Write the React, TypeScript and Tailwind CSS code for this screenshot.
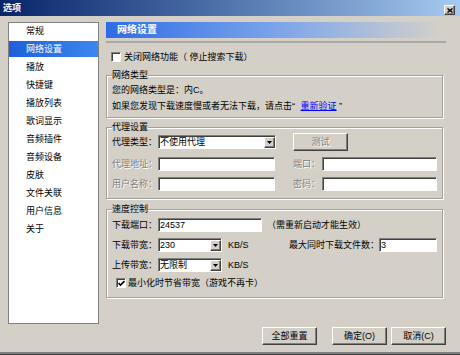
import type { ReactNode } from 'react';

const sunken =
  'border border-t-[#808080] border-l-[#808080] border-b-white border-r-white shadow-[inset_1px_1px_0_#404040]';
const raised =
  'border border-t-white border-l-white border-b-[#404040] border-r-[#404040] shadow-[inset_-1px_-1px_0_#808080]';
const disabled = 'text-[#808080] [text-shadow:1px_1px_0_#fff]';

const menu = ['常规', '网络设置', '播放', '快捷键', '播放列表', '歌词显示', '音频插件', '音频设备', '皮肤', '文件关联', '用户信息', '关于'];

function Group({ title, className, children }: { title: string; className: string; children: ReactNode }) {
  return (
    <fieldset
      className={`w-[337px] border border-[#a0a0a0] shadow-[inset_1px_1px_0_#fff,1px_1px_0_#fff] px-[5px] ${className}`}
    >
      <legend className="p-0 leading-[12px] bg-[#d4d0c8]">{title}</legend>
      {children}
    </fieldset>
  );
}

function Input({ w, value = '' }: { w: string; value?: string }) {
  return (
    <div className={`${w} h-[14px] bg-white ${sunken} flex items-center pl-[1px] leading-[12px]`}>{value}</div>
  );
}

function Select({ w, value }: { w: string; value: string }) {
  return (
    <div className={`${w} h-[14px] bg-white ${sunken} flex items-center`}>
      <span className="flex-1 pl-[1px] leading-[12px]">{value}</span>
      <span className={`w-[11px] h-[11px] bg-[#d4d0c8] ${raised} flex items-center justify-center`}>
        <svg width="5" height="3" viewBox="0 0 5 3">
          <path d="M0 0h5L2.5 3z" fill="#000" />
        </svg>
      </span>
    </div>
  );
}

function Check({ on = false }: { on?: boolean }) {
  return (
    <div className={`w-[10px] h-[10px] bg-white ${sunken} flex items-center justify-center`}>
      {on && (
        <svg width="7" height="7" viewBox="0 0 7 7">
          <path d="M0.5 3l2 2L6.5 1" stroke="#000" strokeWidth="1.6" fill="none" />
        </svg>
      )}
    </div>
  );
}

function Button({ children, className = '' }: { children: ReactNode; className?: string }) {
  return (
    <div className={`h-[18px] bg-[#d4d0c8] ${raised} flex items-center justify-center leading-[12px] ${className}`}>
      {children}
    </div>
  );
}

export default function App() {
  return (
    <div
      lang="zh-CN"
      className="w-[460px] h-[355px] bg-[#d4d0c8] flex flex-col text-[9px] text-black font-['Liberation_Sans','Noto_Sans_CJK_SC',sans-serif] border-b border-b-[#404040] shadow-[inset_0_-2px_0_#808080] overflow-hidden"
    >
      <div className="h-[16px] shrink-0 bg-linear-to-r from-[#0a246a] to-[#a6caf0] flex items-start justify-between pl-[3px] pr-[5px]">
        <span className="mt-[2px] leading-[12px] text-white font-bold">选项</span>
        <span className={`mt-[5px] w-[11px] h-[10px] bg-[#d4d0c8] ${raised} flex items-center justify-center`}>
          <svg width="6" height="5" viewBox="0 0 6 5">
            <path d="M0.5 0.5l5 4M5.5 0.5l-5 4" stroke="#000" strokeWidth="1.4" />
          </svg>
        </span>
      </div>

      <div className="flex pt-[6px]">
        <div className="ml-[8px] w-[91px] h-[302px] bg-white border border-[#808080]">
          {menu.map((m) => (
            <div key={m} className="h-[18px]">
              <div
                className={`h-[16px] flex items-center pl-[17px] leading-[12px] ${
                  m === '网络设置' ? 'bg-linear-to-r from-[#1f5fd8] to-[#3d86f0] text-white' : ''
                }`}
              >
                {m}
              </div>
            </div>
          ))}
        </div>

        <div className="ml-[7px] w-[340px] flex flex-col">
          <div className="w-[337px] h-[16px] bg-linear-to-r from-[#2e6be6] via-[#7aa3ea] to-[#d4d0c8] flex items-center pl-[11px] text-white font-bold text-[10px] leading-[12px]">
            网络设置
          </div>
          <div className="mt-[3px] w-[340px] h-[2px] bg-[#a8a8a8]" />

          <div className="mt-[8px] h-[12px] flex items-center ml-[5px] gap-[3px] leading-[12px]">
            <Check />
            <span>关闭网络功能（ 停止搜索下载）</span>
          </div>

          <Group title="网络类型" className="mt-[6px] pb-[5px]">
            <div className="mt-[3px] leading-[12px]">您的网络类型是：内C。</div>
            <div className="mt-[4px] leading-[12px]">
              如果您发现下载速度慢或者无法下载，请点击“ <span className="ml-[3px] text-[#0000ff] underline">重新验证</span> ”
            </div>
          </Group>

          <Group title="代理设置" className="mt-[3px] pb-[7px]">
            <div className="h-[18px] flex items-center leading-[12px]">
              <span className="w-[46px]">代理类型：</span>
              <Select w="w-[118px]" value="不使用代理" />
              <Button className={`ml-[17px] w-[55px] ${disabled}`}>测试</Button>
            </div>
            <div className="mt-[6px] h-[14px] flex items-center leading-[12px]">
              <span className={`w-[46px] ${disabled}`}>代理地址：</span>
              <Input w="w-[117px]" />
              <span className={`ml-[18px] w-[29px] ${disabled}`}>端口：</span>
              <Input w="w-[115px]" />
            </div>
            <div className="mt-[6px] h-[14px] flex items-center leading-[12px]">
              <span className={`w-[46px] ${disabled}`}>用户名称：</span>
              <Input w="w-[117px]" />
              <span className={`ml-[18px] w-[29px] ${disabled}`}>密码：</span>
              <Input w="w-[115px]" />
            </div>
          </Group>

          <Group title="速度控制" className="mt-[4px] pb-[8px]">
            <div className="mt-[3px] h-[14px] flex items-center leading-[12px]">
              <span className="w-[46px]">下载端口：</span>
              <Input w="w-[104px]" value="24537" />
              <span className="ml-[5px]">（需重新启动才能生效）</span>
            </div>
            <div className="mt-[6px] h-[14px] flex items-center leading-[12px]">
              <span className="w-[46px]">下载带宽：</span>
              <Select w="w-[64px]" value="230" />
              <span className="ml-[6px]">KB/S</span>
              <span className="ml-auto">最大同时下载文件数：</span>
              <Input w="w-[58px]" value="3" />
            </div>
            <div className="mt-[6px] h-[14px] flex items-center leading-[12px]">
              <span className="w-[46px]">上传带宽：</span>
              <Select w="w-[64px]" value="无限制" />
              <span className="ml-[6px]">KB/S</span>
            </div>
            <div className="mt-[5px] h-[12px] flex items-center ml-[4px] gap-[2px] leading-[12px]">
              <Check on />
              <span>最小化时节省带宽（游戏不再卡）</span>
            </div>
          </Group>

          <div className="mt-[29px] flex pl-[156px]">
            <Button className="w-[55px]">全部重置</Button>
            <Button className="ml-[15px] w-[55px]">确定(O)</Button>
            <Button className="ml-[4px] w-[55px]">取消(C)</Button>
          </div>
        </div>
      </div>
    </div>
  );
}
